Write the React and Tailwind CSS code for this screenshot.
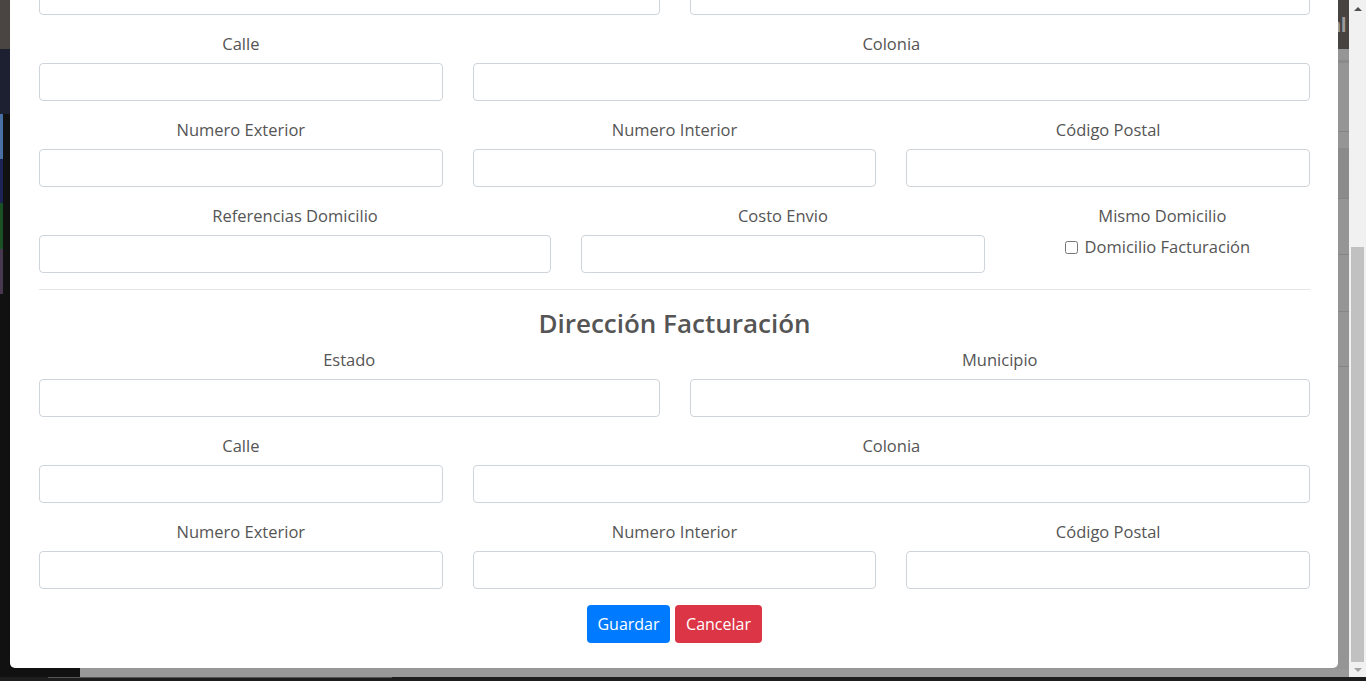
import React from "react";

const SECTION_ONE = [
  [
    { label: "Calle", span: "col-span-4" },
    { label: "Colonia", span: "col-span-8" },
  ],
  [
    { label: "Numero Exterior", span: "col-span-4" },
    { label: "Numero Interior", span: "col-span-4" },
    { label: "Código Postal", span: "col-span-4" },
  ],
];

const SECTION_TWO = [
  [
    { label: "Estado", span: "col-span-6" },
    { label: "Municipio", span: "col-span-6" },
  ],
  [
    { label: "Calle", span: "col-span-4" },
    { label: "Colonia", span: "col-span-8" },
  ],
  [
    { label: "Numero Exterior", span: "col-span-4" },
    { label: "Numero Interior", span: "col-span-4" },
    { label: "Código Postal", span: "col-span-4" },
  ],
];

const TextInput = () => (
  <input
    type="text"
    className="block w-full h-[38px] px-3 rounded-[4px] border border-[#ced4da] bg-white outline-none"
  />
);

const Field = ({ label, span }) => (
  <div className={`${span} mb-4`}>
    <label className="block h-6 pt-px leading-[23px] mb-2 text-center">{label}</label>
    <TextInput />
  </div>
);

const Rows = ({ rows }) =>
  rows.map((row, i) => (
    <div key={i} className="grid grid-cols-12 gap-x-[30px]">
      {row.map((f) => (
        <Field key={f.label} {...f} />
      ))}
    </div>
  ));

const Backdrop = () => (
  <div className="flex flex-col h-full">
    {/* header bar */}
    <div className="h-[49px] flex bg-[#474340]">
      <div className="w-[10px] bg-[#4a4543]" />
      <div className="flex-1 flex justify-end items-center pr-[3px] pt-[2px]">
        <span className="text-[19px] font-bold text-[#9a9a9a] tracking-tight">Personal</span>
      </div>
    </div>
    <div className="flex-1 flex">
      {/* sidebar */}
      <div className="w-[80px] flex flex-col bg-[#111111]">
        <div className="h-[65px] bg-[#1c2030]" />
        <div className="w-[3px] h-[45px] bg-[#4a6fa5]" />
        <div className="w-[3px] h-[44px] bg-[#1e2356]" />
        <div className="w-[3px] h-[46px] bg-[#1a5225]" />
        <div className="w-[3px] h-[45px] bg-[#47384f]" />
      </div>
      {/* page content, dimmed */}
      <div className="flex-1 flex flex-col bg-[#959595]">
        <div className="h-[11px]" />
        <div className="h-[3px] bg-[#8a8a8a]" />
        <div className="h-[68px]" />
        <div className="h-px bg-[#858585]" />
        <div className="h-[16px]" />
        <div className="h-[50px] bg-[#8b8b8b]" />
        <div className="h-px bg-[#858585]" />
        <div className="h-[55px]" />
        <div className="h-px bg-[#858585]" />
        <div className="h-[56px]" />
        <div className="h-px bg-[#858585]" />
        <div className="h-[54px]" />
        <div className="h-px bg-[#858585]" />
        <div className="flex-1 flex flex-col justify-end">
          <div className="h-[8px] bg-[#999999]" />
        </div>
      </div>
    </div>
  </div>
);

const Scrollbar = () => (
  <div className="w-[17px] h-full bg-[#f1f1f1] flex flex-col items-center">
    <div className="h-[17px] flex items-center justify-center">
      <div className="w-0 h-0 border-l-[4px] border-r-[4px] border-b-[4px] border-l-transparent border-r-transparent border-b-[#505050]" />
    </div>
    <div className="h-[230px]" />
    <div className="w-[13px] h-[415px] bg-[#c1c1c1]" />
    <div className="flex-1 flex items-center justify-center">
      <div className="w-0 h-0 border-l-[4px] border-r-[4px] border-t-[4px] border-l-transparent border-r-transparent border-t-[#a3a3a3]" />
    </div>
  </div>
);

export default function App() {
  return (
    <div
      className="w-[1366px] h-[681px] overflow-hidden flex flex-col bg-[#1e1e1e]"
      style={{ fontFamily: '"Open Sans", "Noto Sans", sans-serif' }}
    >
      <div className="h-[677px] flex">
        <div className="relative w-[1349px] h-full overflow-hidden">
          <Backdrop />

          {/* modal dialog, scrolled so its upper part is out of view */}
          <div className="absolute left-[10px] top-[-23px] w-[1328px] bg-white rounded-[5px] pl-[29px] pr-[28px] pb-[25px] text-[16.5px] text-[#555555]">
            <div className="grid grid-cols-12 gap-x-[30px]">
              <div className="col-span-6 mb-4">
                <TextInput />
              </div>
              <div className="col-span-6 mb-4">
                <TextInput />
              </div>
            </div>

            <Rows rows={SECTION_ONE} />

            <div className="grid grid-cols-12 gap-x-[30px]">
              <Field label="Referencias Domicilio" span="col-span-5" />
              <Field label="Costo Envio" span="col-span-4" />
              <div className="col-span-3 mb-4">
                <div className="h-6 pt-px leading-[23px] mb-2 text-center">Mismo Domicilio</div>
                <label className="flex items-center justify-center gap-[7px] h-6 pt-px pr-[10px]">
                  <input type="checkbox" className="w-[13px] h-[13px] m-0" />
                  <span>Domicilio Facturación</span>
                </label>
              </div>
            </div>

            <hr className="border-0 border-t border-[#e5e5e5] mb-4" />

            <h3 className="h-[33px] leading-[33px] pt-px mb-2 text-center text-[26px] font-semibold text-[#555555]">
              Dirección Facturación
            </h3>

            <Rows rows={SECTION_TWO} />

            <div className="flex justify-center gap-[5px]">
              <button className="w-[83px] h-[38px] rounded-[4px] bg-[#007bff] text-white text-[16px]">
                Guardar
              </button>
              <button className="w-[87px] h-[38px] rounded-[4px] bg-[#dc3545] text-white text-[16px]">
                Cancelar
              </button>
            </div>
          </div>
        </div>
        <Scrollbar />
      </div>
      <div className="h-[4px] flex">
        <div className="w-[48px]" />
        <div className="w-[344px] h-px bg-[#555555]" />
      </div>
    </div>
  );
}
